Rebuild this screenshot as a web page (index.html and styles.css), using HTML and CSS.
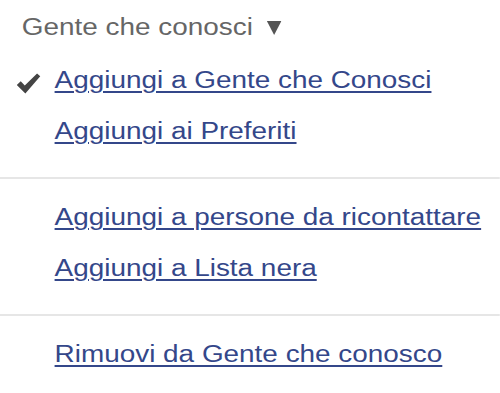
FILE: index.html
```html
<!doctype html>
<html>
  <head>
    <title>Gente che conosci</title>
    <link rel="stylesheet" href="styles.css">
  </head>
  <body>
    <div class="menu">
      <div class="menu-title">
        Gente che conosci<svg class="caret" viewBox="0 0 10 12" preserveAspectRatio="none"><path d="M0 0 H10 L5 12 Z"/></svg>
      </div>
      <div class="group">
        <div class="item">
          <span class="mark"><svg class="check" viewBox="0 0 25 21" preserveAspectRatio="none"><path d="M1 12 L5 8.3 L9 12.6 L21.3 0.5 L24.5 3.2 L9.6 20.5 Z"/></svg></span>
          <a href="#">Aggiungi a Gente che Conosci</a>
        </div>
        <div class="item">
          <span class="mark"></span>
          <a href="#">Aggiungi ai Preferiti</a>
        </div>
      </div>
      <div class="group">
        <div class="item">
          <span class="mark"></span>
          <a href="#">Aggiungi a persone da ricontattare</a>
        </div>
        <div class="item">
          <span class="mark"></span>
          <a href="#">Aggiungi a Lista nera</a>
        </div>
      </div>
      <div class="group">
        <div class="item">
          <span class="mark"></span>
          <a href="#">Rimuovi da Gente che conosco</a>
        </div>
      </div>
    </div>
  </body>
</html>
```

FILE: styles.css
```css
html, body {
  margin: 0;
  background: #fff;
}
/* the original menu is rendered wide, so stretch the whole block */
.menu {
  width: 412px;
  transform: scaleX(1.213);
  transform-origin: 0 0;
  font-family: "Liberation Sans", Arial, sans-serif;
  font-size: 23px;
}
.menu-title {
  padding: 12px 0 0 18px;
  line-height: 30px;
  color: #666;
}
.caret {
  width: 12px;
  height: 14px;
  margin-left: 11px;
  fill: #555;
}
.group {
  padding: 13px 0 20px;
}
.group + .group {
  border-top: 2px solid #e6e6e6;
}
.item {
  display: flex;
  align-items: baseline;
  line-height: 51px;
}
.mark {
  flex: none;
  width: 45px;
}
.check {
  width: 20.6px;
  height: 21px;
  margin-left: 13px;
  vertical-align: -6px;
  fill: #444;
}
.item a {
  color: #34478a;
  text-decoration: underline;
  text-decoration-thickness: 2px;
  text-underline-offset: 3px;
  white-space: nowrap;
}
```
